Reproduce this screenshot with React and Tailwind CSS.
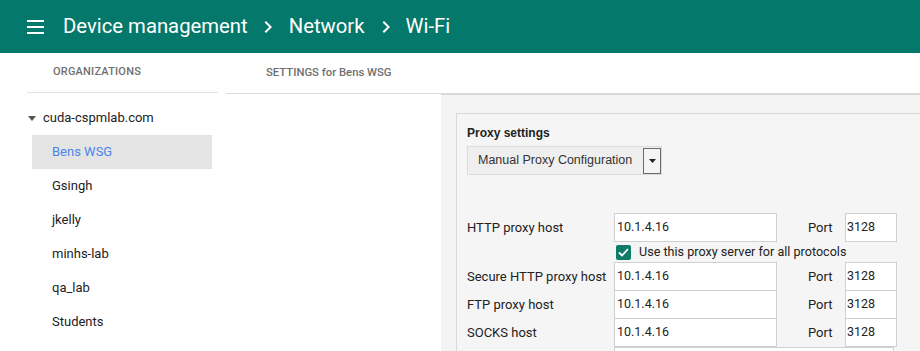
import { useState } from 'react'

const orgs = ['Bens WSG', 'Gsingh', 'jkelly', 'minhs-lab', 'qa_lab', 'Students']

const proxyRows = [
  { label: 'HTTP proxy host', host: '10.1.4.16', port: '3128' },
  { label: 'Secure HTTP proxy host', host: '10.1.4.16', port: '3128' },
  { label: 'FTP proxy host', host: '10.1.4.16', port: '3128' },
  { label: 'SOCKS host', host: '10.1.4.16', port: '3128' },
]

function Chevron() {
  return (
    <svg width="24" height="24" viewBox="0 0 24 24" fill="currentColor" className="shrink-0">
      <path d="M10 6 8.59 7.41 13.17 12l-4.58 4.59L10 18l6-6z" />
    </svg>
  )
}

function ProxyRow({ row }) {
  return (
    <div className="flex items-center h-[29px] -mb-px">
      <span className="w-[147px] shrink-0">{row.label}</span>
      <div className="w-[163px] h-[29px] shrink-0 bg-white border border-[#d0d0d0] flex items-center pl-[2px] text-[12.5px]">
        {row.host}
      </div>
      <span className="w-[68px] shrink-0 pl-[31px]">Port</span>
      <div className="w-[52px] h-[29px] shrink-0 bg-white border border-[#d0d0d0] flex items-center pl-[1px] text-[12.5px]">
        {row.port}
      </div>
    </div>
  )
}

export default function App() {
  const [selected, setSelected] = useState('Bens WSG')
  const [allProtocols, setAllProtocols] = useState(true)
  const [first, ...rest] = proxyRows

  return (
    <div className="w-[920px] h-[351px] overflow-hidden bg-white font-['Roboto',sans-serif]">
      {/* Barra superior */}
      <header className="h-[53px] bg-[#04786a] flex items-center text-white text-[20.3px]">
        <svg width="18" height="14" viewBox="0 0 18 14" className="ml-[27px] mr-[18px]" fill="currentColor">
          <rect x="0" y="0" width="17" height="2" />
          <rect x="0" y="6" width="17" height="2" />
          <rect x="0" y="12" width="17" height="2" />
        </svg>
        <span>Device management</span>
        <span className="ml-[8px] mr-[9px] flex"><Chevron /></span>
        <span>Network</span>
        <span className="ml-[9px] mr-[8px] flex"><Chevron /></span>
        <span>Wi-Fi</span>
      </header>

      <div className="flex">
        {/* Organizaciones */}
        <aside className="w-[226px] shrink-0">
          <div className="ml-[27px] w-[191px] h-[40px] border-b border-[#e3e3e3] flex items-center pl-[26px] text-[11px] font-medium text-[#6f6f6f] tracking-[0.2px]">
            ORGANIZATIONS
          </div>
          <div className="pt-[8px] text-[13px] text-[#222]">
            <div className="h-[34px] flex items-center pl-[28px]">
              <svg width="8" height="5" viewBox="0 0 8 5" className="mr-[7px]" fill="#555">
                <path d="M0 0h8L4 5z" />
              </svg>
              cuda-cspmlab.com
            </div>
            {orgs.map((o) => (
              <div
                key={o}
                onClick={() => setSelected(o)}
                className={
                  o === selected
                    ? 'ml-[32px] w-[180px] h-[34px] flex items-center pl-[20px] bg-[#e4e4e4] text-[#4a86e8]'
                    : 'ml-[32px] w-[180px] h-[34px] flex items-center pl-[20px]'
                }
              >
                {o}
              </div>
            ))}
          </div>
        </aside>

        {/* Ajustes */}
        <main className="flex-1 min-w-0">
          <div className="h-[41px] border-b border-[#dcdcdc] flex items-center pl-[40px] pt-[1px] text-[11.3px] font-medium text-[#6f6f6f]">
            SETTINGS for Bens WSG
          </div>
          <div className="flex">
            <div className="w-[215px] shrink-0" />
            <div className="flex-1 h-[260px] bg-[#f3f3f3] border-t border-[#d6d6d6] pt-[18px] pl-[15px] overflow-hidden">
              <div className="w-[600px] h-[300px] border border-[#d9d9d9] bg-[#f5f5f5] pt-[11px] pl-[10px] text-[13px] text-[#222]">
                <div className="font-['Liberation_Sans',Arial,sans-serif] text-[12px] font-bold text-[#222] h-[16px] flex items-center">
                  Proxy settings
                </div>
                <div className="mt-[5px] w-[195px] h-[29px] border border-[#dcdcdc] bg-[#efefef] flex items-center justify-between font-['Liberation_Sans',Arial,sans-serif] text-[12.5px] text-[#333]">
                  <span className="pl-[10px]">Manual Proxy Configuration</span>
                  <span className="w-[18px] h-[26px] border border-[#6a6a6a] bg-[#f4f4f4] flex items-center justify-center">
                    <svg width="7" height="4" viewBox="0 0 7 4" fill="#222">
                      <path d="M0 0h7L3.5 4z" />
                    </svg>
                  </span>
                </div>

                <div className="mt-[38px]">
                  <ProxyRow row={first} />
                  <label className="h-[20px] flex items-center pl-[149px] gap-[8px] mt-px text-[12.6px]">
                    <input
                      type="checkbox"
                      checked={allProtocols}
                      onChange={() => setAllProtocols((v) => !v)}
                      className="hidden"
                    />
                    <span className="w-[15px] h-[15px] rounded-[2px] bg-[#0e7a68] flex items-center justify-center">
                      {allProtocols && (
                        <svg width="11" height="9" viewBox="0 0 11 9" fill="none" stroke="white" strokeWidth="1.8">
                          <path d="M1 4.5 4 7.5 10 1" />
                        </svg>
                      )}
                    </span>
                    Use this proxy server for all protocols
                  </label>
                  {rest.map((r) => (
                    <ProxyRow key={r.label} row={r} />
                  ))}
                  <div className="flex h-[29px] mt-px">
                    <span className="w-[147px] shrink-0" />
                    <div className="w-[280px] h-[29px] bg-white border border-[#d0d0d0]" />
                  </div>
                </div>
              </div>
            </div>
          </div>
        </main>
      </div>
    </div>
  )
}
